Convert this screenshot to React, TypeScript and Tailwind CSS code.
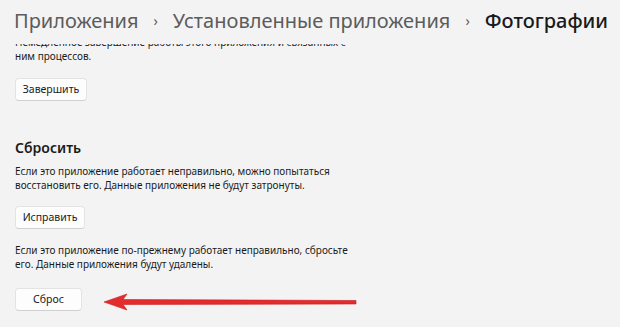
import React from 'react';

function Btn({ label, w }: { label: string; w: string }) {
  return (
    <button
      className={`${w} h-[23px] rounded-[4px] border border-[#e3e3e3] border-b-[#d0d0d0] bg-[#fdfdfd] text-[10.5px] leading-none text-[#1b1b1b]`}
    >
      {label}
    </button>
  );
}

function Arrow() {
  return (
    <svg width="254" height="26" viewBox="0 0 254 26" className="shrink-0">
      <polygon
        points="0,14 23,6 19,11.5 252,12.5 252,16 19,16.5 23,22"
        fill="#e42b2d"
        stroke="#c81f22"
        strokeWidth="0.6"
        strokeLinejoin="round"
      />
    </svg>
  );
}

export default function App() {
  return (
    <div
      className="relative h-[327px] w-[620px] overflow-hidden bg-[#f3f3f3] text-[#1b1b1b]"
      style={{ fontFamily: '"Noto Sans", "Open Sans", sans-serif' }}
    >
      <header className="relative z-10 flex h-[44px] items-start gap-[15px] whitespace-nowrap bg-[#f3f3f3] pl-[14px] pt-[7px] text-[20px] leading-[28px]">
        <span className="text-[#5c5c5c]">Приложения</span>
        <span className="text-[14px] text-[#5c5c5c]">›</span>
        <span className="text-[#5c5c5c]">Установленные приложения</span>
        <span className="text-[14px] text-[#5c5c5c]">›</span>
        <span className="font-medium text-[#1a1a1a]">Фотографии</span>
      </header>

      <main className="-mt-[9px] flex flex-col items-start pl-[15px] text-[10px] leading-[14px]">
        <p>
          Немедленное завершение работы этого приложения и связанных с
          <br />
          ним процессов.
        </p>
        <div className="mt-[15px]">
          <Btn label="Завершить" w="w-[72px]" />
        </div>

        <h2 className="mt-[37px] text-[14px] font-semibold leading-[20px]">Сбросить</h2>
        <p className="mt-[6px]">
          Если это приложение работает неправильно, можно попытаться
          <br />
          восстановить его. Данные приложения не будут затронуты.
        </p>
        <div className="mt-[14px]">
          <Btn label="Исправить" w="w-[70px]" />
        </div>

        <p className="mt-[14px]">
          Если это приложение по-прежнему работает неправильно, сбросьте
          <br />
          его. Данные приложения будут удалены.
        </p>
        <div className="mt-[14px] flex items-center gap-[22px]">
          <Btn label="Сброс" w="w-[67px]" />
          <div className="mt-[3px]">
            <Arrow />
          </div>
        </div>
      </main>
    </div>
  );
}
